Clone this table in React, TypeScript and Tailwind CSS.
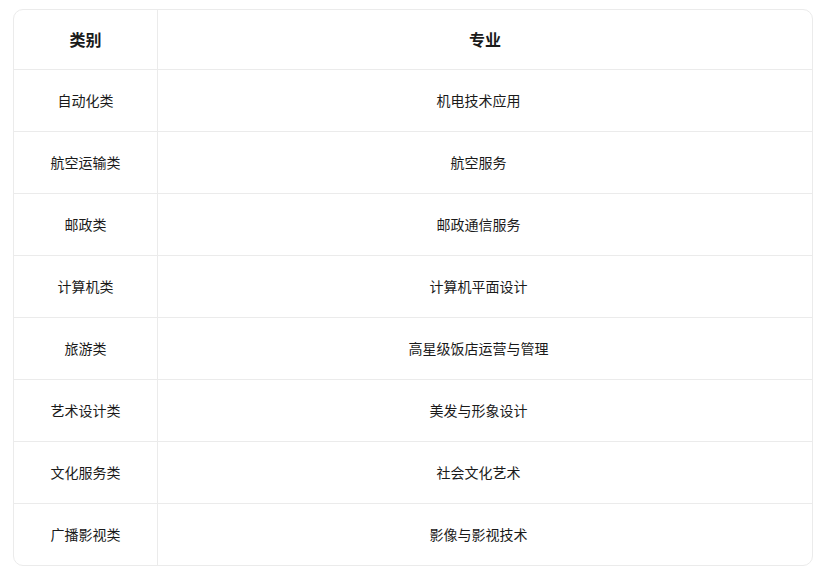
import React from "react";

const rows: [string, string][] = [
  ["自动化类", "机电技术应用"],
  ["航空运输类", "航空服务"],
  ["邮政类", "邮政通信服务"],
  ["计算机类", "计算机平面设计"],
  ["旅游类", "高星级饭店运营与管理"],
  ["艺术设计类", "美发与形象设计"],
  ["文化服务类", "社会文化艺术"],
  ["广播影视类", "影像与影视技术"],
];

export default function App() {
  return (
    <div
      className="min-h-[580px] w-[817px] bg-white pt-[9px] pl-[13px]"
      style={{ fontFamily: '"Noto Sans CJK SC", "Noto Sans", sans-serif' }}
    >
      <div className="w-[800px] overflow-hidden rounded-[10px] border border-[#ebebeb] text-[#1a1a1a]">
        <div className="grid h-[60px] grid-cols-[144px_1fr] border-b border-[#ebebeb] text-[16px] font-bold">
          <div className="flex items-center justify-center border-r border-[#ebebeb] pb-[2px]">类别</div>
          <div className="flex items-center justify-center pb-[2px]">专业</div>
        </div>
        {rows.map(([a, b], i) => (
          <div
            key={a}
            className={
              i < rows.length - 1
                ? "grid h-[62px] grid-cols-[144px_1fr] border-b border-[#ebebeb] text-[14px]"
                : "grid h-[61px] grid-cols-[144px_1fr] text-[14px]"
            }
          >
            <div className="flex items-center justify-center border-r border-[#ebebeb]">{a}</div>
            <div className="flex items-center justify-center pr-[13px]">{b}</div>
          </div>
        ))}
      </div>
    </div>
  );
}
